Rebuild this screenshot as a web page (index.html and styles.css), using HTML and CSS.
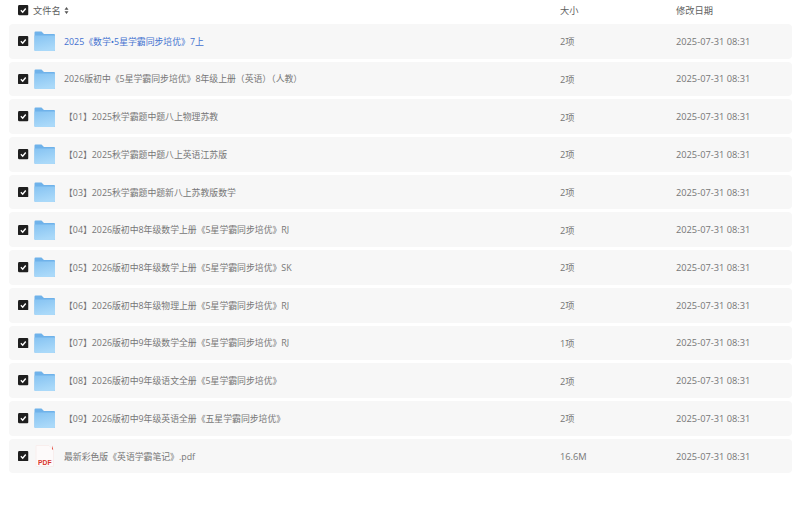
FILE: index.html
```html
<!DOCTYPE html>
<html lang="zh">
<head>
<meta charset="utf-8">
<title>文件列表</title>
<link rel="stylesheet" href="styles.css">
</head>
<body>
<svg class="defs" width="0" height="0" aria-hidden="true">
  <defs>
    <linearGradient id="fg" x1="0" y1="0" x2="0.300" y2="1">
      <stop offset="0" stop-color="#86c3f2"/>
      <stop offset="1" stop-color="#aad9f9"/>
    </linearGradient>
    <symbol id="folder" viewBox="0 0 21 20">
      <path d="M0.500 1.500q0-1 1-1h6l2.500 2.500h10q1 0 1 1v15q0 1-1 1h-18.500q-1 0-1-1z" fill="#6fb2ea"/>
      <path d="M0.500 4.500h20.500v14.500q0 1-1 1h-18.500q-1 0-1-1z" fill="url(#fg)"/>
    </symbol>
    <symbol id="check" viewBox="0 0 11 11">
      <rect width="11" height="11" rx="1.500" fill="#1f1f1f"/>
      <path d="M3 5.600l1.900 1.900 3.200-3.800" fill="none" stroke="#fff" stroke-width="1.500"/>
    </symbol>
  </defs>
</svg>
<main class="list">
  <div class="head">
    <div class="name-cell">
      <svg class="check"><use href="#check"/></svg>
      <span class="head-name">文件名</span>
      <svg class="sort" viewBox="0 0 5 7"><path d="M2.500 0l2 2.800h-4zM2.500 7l-2-2.800h4z" fill="#555"/></svg>
    </div>
    <div class="size">大小</div>
    <div class="date">修改日期</div>
  </div>
  <div class="row">
    <div class="name-cell"><svg class="check"><use href="#check"/></svg><svg class="folder"><use href="#folder"/></svg><a class="title link">2025《数学•5星学霸同步培优》7上</a></div>
    <div class="size">2项</div><div class="date">2025-07-31 08:31</div>
  </div>
  <div class="row">
    <div class="name-cell"><svg class="check"><use href="#check"/></svg><svg class="folder"><use href="#folder"/></svg><span class="title">2026版初中《5星学霸同步培优》8年级上册（英语）（人教）</span></div>
    <div class="size">2项</div><div class="date">2025-07-31 08:31</div>
  </div>
  <div class="row">
    <div class="name-cell"><svg class="check"><use href="#check"/></svg><svg class="folder"><use href="#folder"/></svg><span class="title">【01】2025秋学霸题中题八上物理苏教</span></div>
    <div class="size">2项</div><div class="date">2025-07-31 08:31</div>
  </div>
  <div class="row">
    <div class="name-cell"><svg class="check"><use href="#check"/></svg><svg class="folder"><use href="#folder"/></svg><span class="title">【02】2025秋学霸题中题八上英语江苏版</span></div>
    <div class="size">2项</div><div class="date">2025-07-31 08:31</div>
  </div>
  <div class="row">
    <div class="name-cell"><svg class="check"><use href="#check"/></svg><svg class="folder"><use href="#folder"/></svg><span class="title">【03】2025秋学霸题中题新八上苏教版数学</span></div>
    <div class="size">2项</div><div class="date">2025-07-31 08:31</div>
  </div>
  <div class="row">
    <div class="name-cell"><svg class="check"><use href="#check"/></svg><svg class="folder"><use href="#folder"/></svg><span class="title">【04】2026版初中8年级数学上册《5星学霸同步培优》RJ</span></div>
    <div class="size">2项</div><div class="date">2025-07-31 08:31</div>
  </div>
  <div class="row">
    <div class="name-cell"><svg class="check"><use href="#check"/></svg><svg class="folder"><use href="#folder"/></svg><span class="title">【05】2026版初中8年级数学上册《5星学霸同步培优》SK</span></div>
    <div class="size">2项</div><div class="date">2025-07-31 08:31</div>
  </div>
  <div class="row">
    <div class="name-cell"><svg class="check"><use href="#check"/></svg><svg class="folder"><use href="#folder"/></svg><span class="title">【06】2026版初中8年级物理上册《5星学霸同步培优》RJ</span></div>
    <div class="size">2项</div><div class="date">2025-07-31 08:31</div>
  </div>
  <div class="row">
    <div class="name-cell"><svg class="check"><use href="#check"/></svg><svg class="folder"><use href="#folder"/></svg><span class="title">【07】2026版初中9年级数学全册《5星学霸同步培优》RJ</span></div>
    <div class="size">1项</div><div class="date">2025-07-31 08:31</div>
  </div>
  <div class="row">
    <div class="name-cell"><svg class="check"><use href="#check"/></svg><svg class="folder"><use href="#folder"/></svg><span class="title">【08】2026版初中9年级语文全册《5星学霸同步培优》</span></div>
    <div class="size">2项</div><div class="date">2025-07-31 08:31</div>
  </div>
  <div class="row">
    <div class="name-cell"><svg class="check"><use href="#check"/></svg><svg class="folder"><use href="#folder"/></svg><span class="title">【09】2026版初中9年级英语全册《五星学霸同步培优》</span></div>
    <div class="size">2项</div><div class="date">2025-07-31 08:31</div>
  </div>
  <div class="row">
    <div class="name-cell"><svg class="check"><use href="#check"/></svg>
      <span class="pdf">
        <svg class="pdf-page" viewBox="0 0 19 22"><path d="M1 0.500h13l4.500 4.500v16.500h-17.500z" fill="#fdfafa" stroke="#f8eeed"/><path d="M17 0.500v4h1.200z" fill="#e4483c"/></svg>
        <span class="pdf-label">PDF</span>
      </span>
      <span class="title">最新彩色版《英语学霸笔记》.pdf</span></div>
    <div class="size">16.6M</div><div class="date">2025-07-31 08:31</div>
  </div>
</main>
</body>
</html>
```
FILE: styles.css
```css
* { box-sizing: border-box; }
html, body { margin: 0; padding: 0; background: #fff; }
body {
  width: 800px;
  height: 528px;
  overflow: hidden;
  font-family: "Open Sans", "Noto Sans CJK SC", sans-serif;
  font-size: 9.250px;
  color: #767676;
}
.defs { position: absolute; }
.list {
  display: flex;
  flex-direction: column;
  gap: 3px;
  padding: 0 8px 0 9px;
}
.head, .row {
  display: grid;
  grid-template-columns: 551px 116px 1fr;
  align-items: center;
}
.head { height: 20.800px; color: #5f5f5f; font-size: 9.250px; }
.row {
  height: 34.730px;
  background: #f7f7f7;
  border-radius: 4px;
}
.name-cell { display: flex; align-items: center; padding-left: 9px; }
.check { width: 10.500px; height: 10.500px; flex: none; }
.head-name { margin-left: 4.500px; }
.sort { width: 5px; height: 7px; margin-left: 3px; }
.folder { width: 21px; height: 20px; margin-left: 5.500px; flex: none; }
.title { margin-left: 9px; white-space: nowrap; font-size: 8.850px; }
.link { color: #4472d0; }
.pdf { position: relative; width: 19px; height: 22px; margin-left: 6.500px; flex: none; }
.pdf-page { display: block; width: 19px; height: 22px; }
.pdf-label {
  position: absolute;
  left: 2.500px;
  bottom: 0.500px;
  font-family: "Liberation Sans", sans-serif;
  font-size: 7.500px;
  font-weight: 700;
  line-height: 8px;
  transform: scaleX(0.900);
  transform-origin: left center;
  color: #d9352b;
}
.pdf + .title { margin-left: 10px; }
```
